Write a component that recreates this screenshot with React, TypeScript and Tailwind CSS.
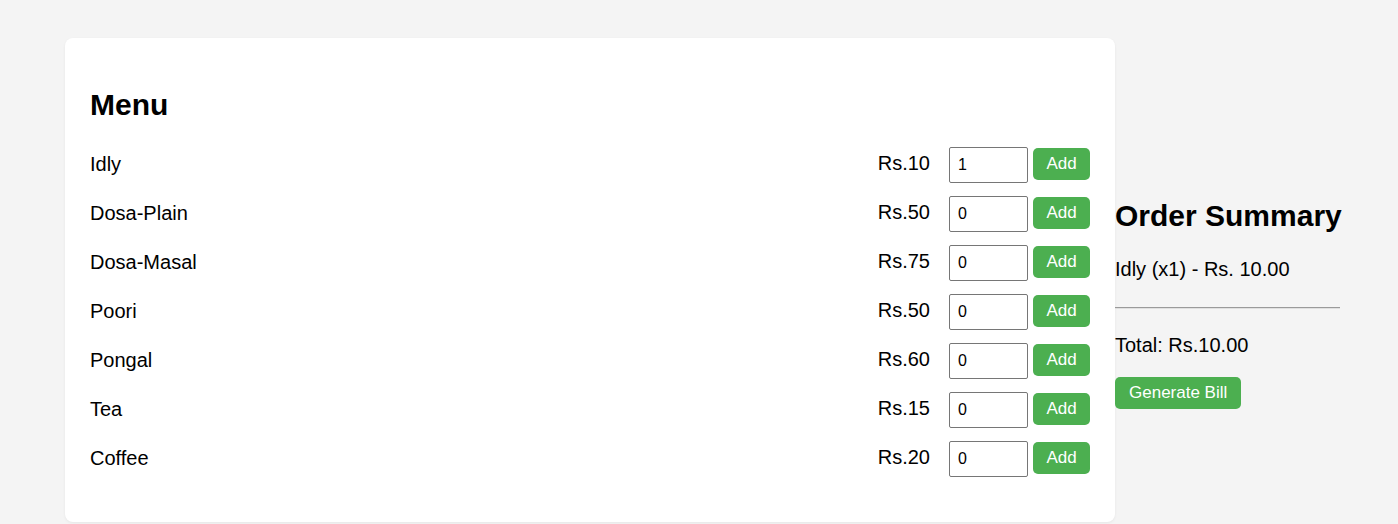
import React, { useState } from 'react';

interface MenuItem {
    name: string;
    price: number;
}

const menuItems: MenuItem[] = [
    { name: 'Idly', price: 10 },
    { name: 'Dosa-Plain', price: 50 },
    { name: 'Dosa-Masal', price: 75 },
    { name: 'Poori', price: 50 },
    { name: 'Pongal', price: 60 },
    { name: 'Tea', price: 15 },
    { name: 'Coffee', price: 20 },
];

const App: React.FC = () => {
    const [qty, setQty] = useState<number[]>([1, 0, 0, 0, 0, 0, 0]);
    const [order, setOrder] = useState<{ name: string; qty: number; price: number }[]>([
        { name: 'Idly', qty: 1, price: 10 },
    ]);

    const total = order.reduce((sum, o) => sum + o.qty * o.price, 0);

    const handleAdd = (i: number) => {
        if (qty[i] <= 0) return;
        const item = menuItems[i];
        setOrder(prev => {
            const rest = prev.filter(o => o.name !== item.name);
            return [...rest, { name: item.name, qty: qty[i], price: item.price }];
        });
    };

    return (
        <div className="min-h-[524px] bg-[#f4f4f4] font-['Liberation_Sans',Arial,sans-serif] text-[20px] text-black">
            <div className="flex items-start pl-[65px] pt-[38px]">
                <div className="w-[1050px] shrink-0 bg-white rounded-lg shadow-[0_1px_3px_rgba(0,0,0,0.06)] px-[25px] pt-[50px] pb-[39px]">
                    <h2 className="text-[30px] font-bold leading-[34px] mb-[18px]">Menu</h2>
                    {menuItems.map((item, i) => (
                        <div key={item.name} className="flex items-center h-[49px]">
                            <span className="flex-1 leading-[23px]">{item.name}</span>
                            <span className="leading-[23px] mr-[19px] -mt-[3px]">Rs.{item.price}</span>
                            <input
                                type="number"
                                value={qty[i]}
                                onChange={e => {
                                    const next = [...qty];
                                    next[i] = Number(e.target.value);
                                    setQty(next);
                                }}
                                className="w-[79px] h-[36px] border border-[#767676] rounded-[2px] px-[8px] text-[16px] text-black outline-none [appearance:textfield] [&::-webkit-inner-spin-button]:appearance-none"
                            />
                            <button
                                onClick={() => handleAdd(i)}
                                className="ml-[5px] -mt-[1px] w-[57px] h-[32px] bg-[#4caf50] text-white text-[17px] rounded-[5px]"
                            >
                                Add
                            </button>
                        </div>
                    ))}
                </div>
                <div className="w-[225px] shrink-0 mt-[161px]">
                    <h2 className="text-[30px] font-bold leading-[34px] whitespace-nowrap">Order Summary</h2>
                    <div className="mt-[25px]">
                        {order.map(o => (
                            <p key={o.name} className="leading-[23px]">
                                {o.name} (x{o.qty}) - Rs. {(o.qty * o.price).toFixed(2)}
                            </p>
                        ))}
                    </div>
                    <hr className="mt-[26px] border-t border-b border-t-[#9a9a9a] border-b-[#e0e0e0]" />
                    <p className="mt-[25px] leading-[23px]">Total: Rs.{total.toFixed(2)}</p>
                    <button className="mt-[20px] h-[32px] px-[14px] bg-[#4caf50] text-white text-[17px] rounded-[5px]">
                        Generate Bill
                    </button>
                </div>
            </div>
        </div>
    );
};

export default App;
